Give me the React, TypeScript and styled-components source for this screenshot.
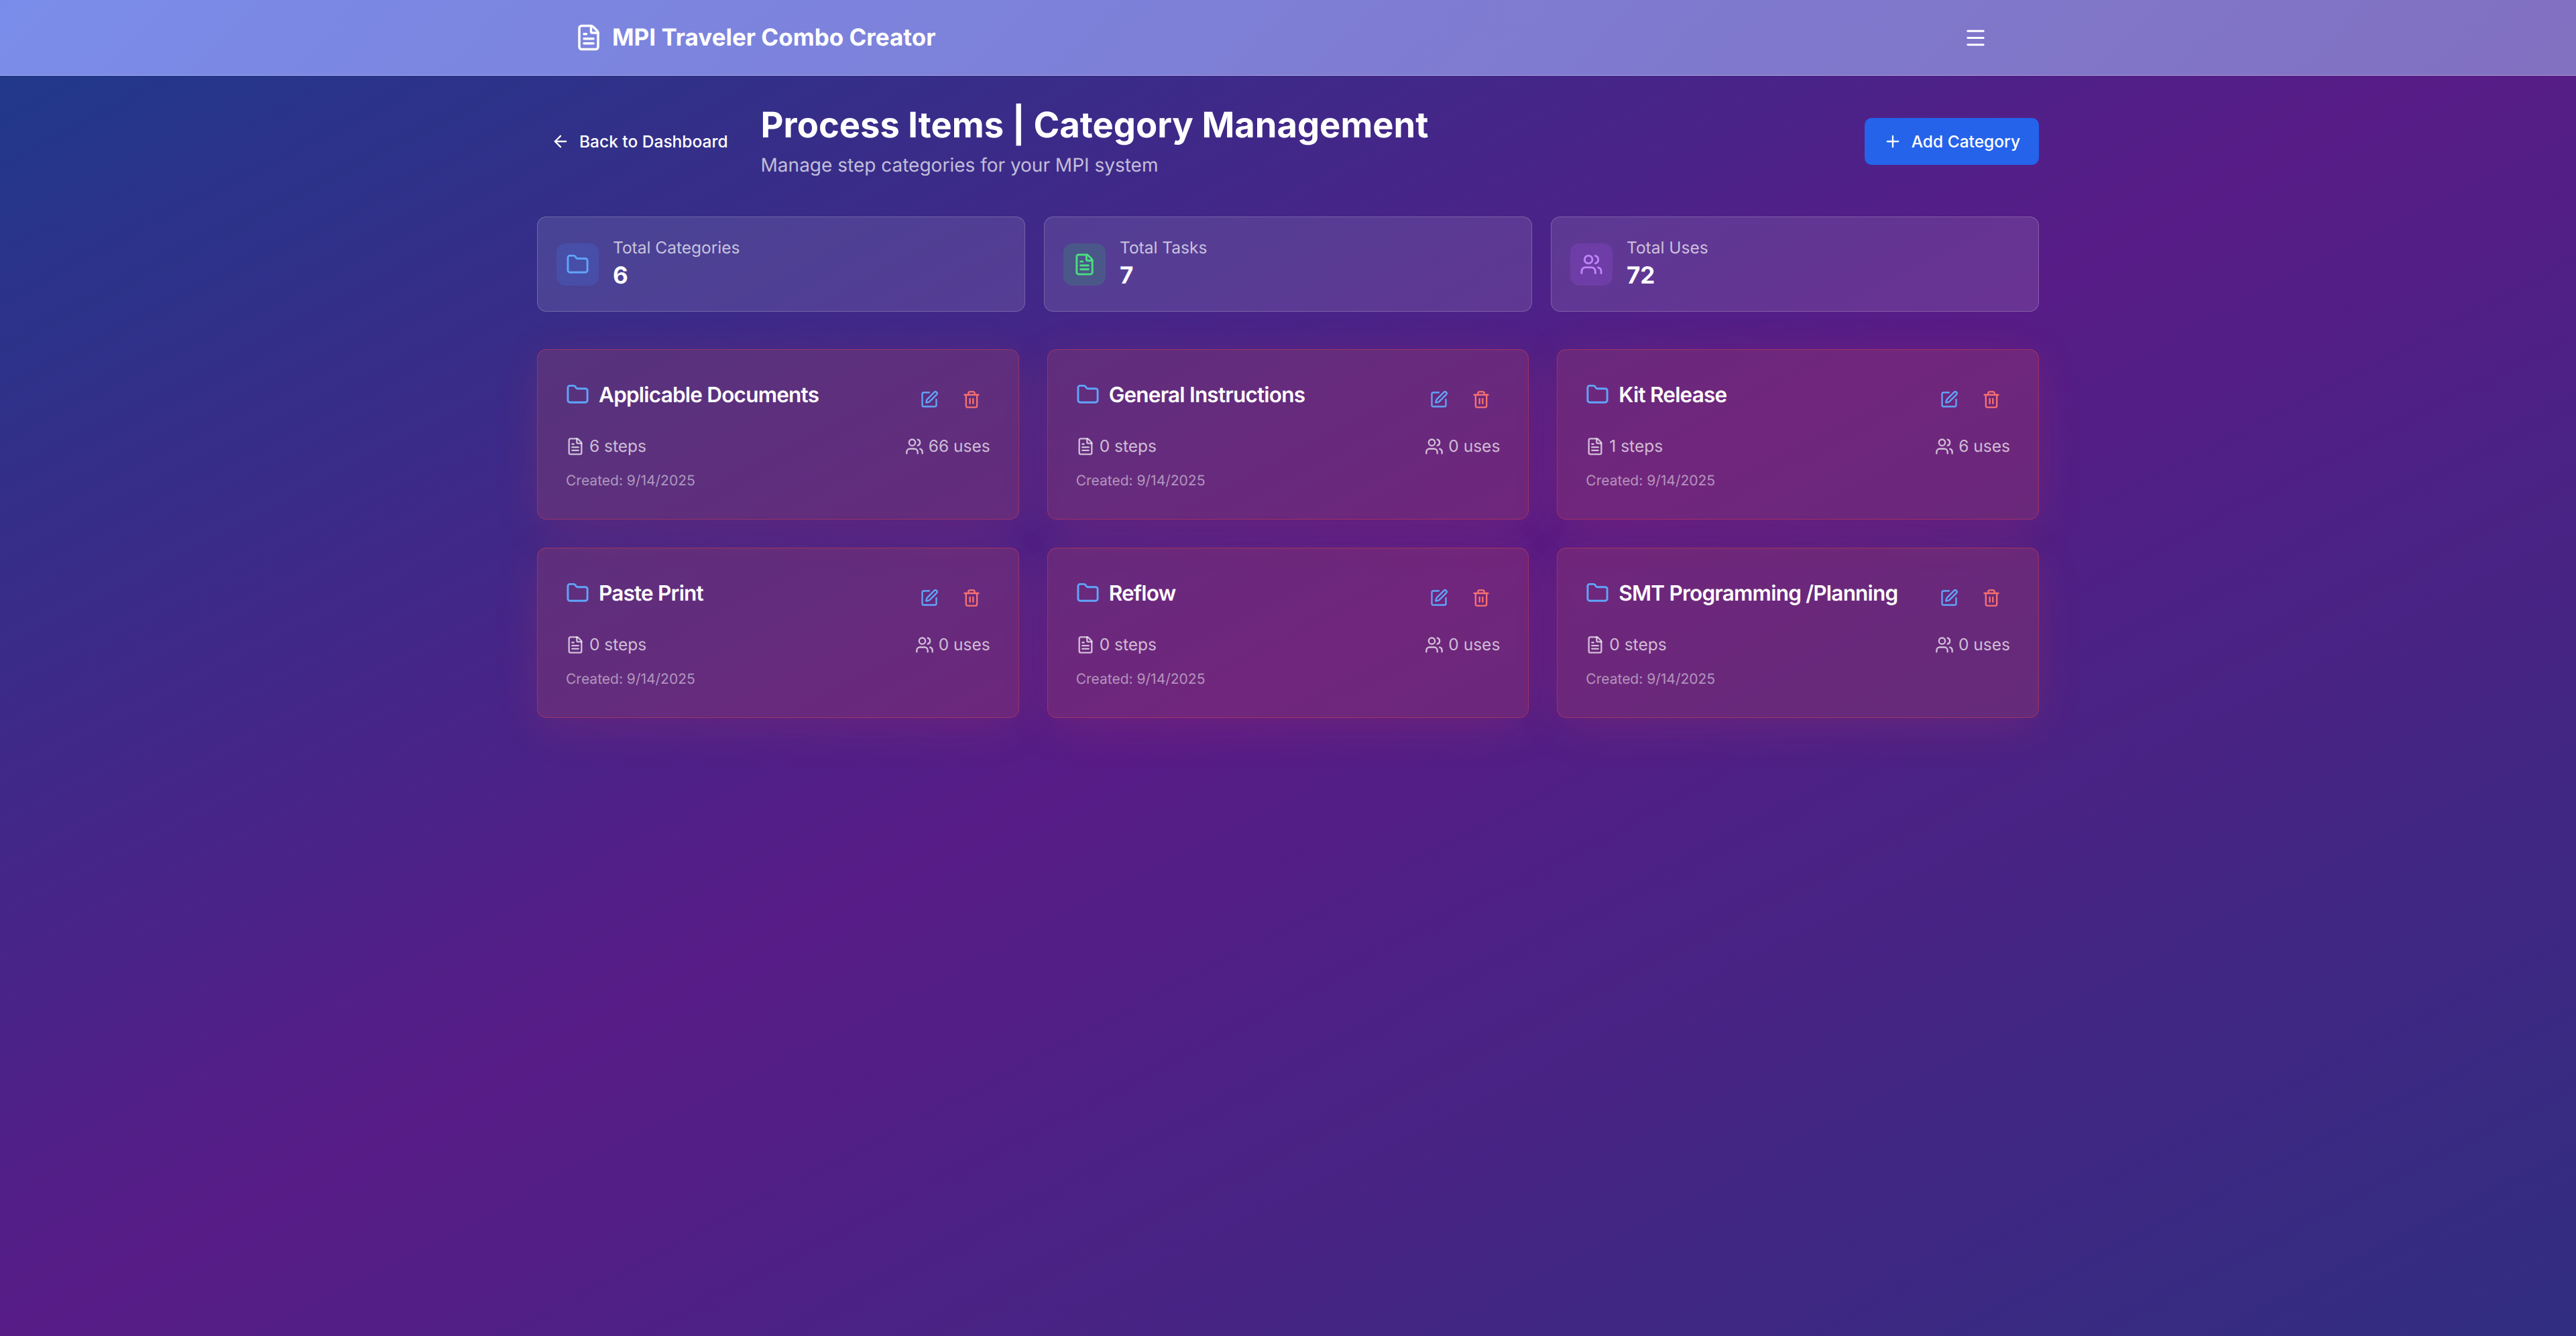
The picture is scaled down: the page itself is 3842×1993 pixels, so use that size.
import React from "react"
import styled, {createGlobalStyle} from "styled-components";
import {ArrowLeft, FileText, Folder, Menu, Plus, SquarePen, Trash2, Users} from "lucide-react";

const GlobalStyle = createGlobalStyle`
  html, body {
    margin: 0;
    padding: 0;
  }

  body {
    font-family: Inter, "Liberation Sans", sans-serif;
    text-rendering: geometricPrecision;
  }

  * {
    box-sizing: border-box;
  }
`

const Page = styled.div`
  min-height: 100vh;
  background: linear-gradient(to bottom right, #1e3a8a, #581c87, #312e81);
  color: #fff;
`

const Nav = styled.header`
  height: 113px;
  background: linear-gradient(135deg, #7a8ce9, #8270c0);
  border-bottom: 1px solid rgba(255, 255, 255, 0.3);
`

const NavInner = styled.div`
  width: 2240px;
  height: 112px;
  margin: 0 auto;
  padding: 0 56px;
  display: flex;
  align-items: center;
  justify-content: space-between;
`

const Brand = styled.div`
  display: flex;
  align-items: center;
  gap: 14px;
  font-size: 35px;
  line-height: 49px;
  font-weight: 700;
`

const MenuButton = styled.button`
  width: 63px;
  height: 63px;
  margin-right: 7px;
  padding: 14px;
  border: 0;
  background: none;
  color: #fff;
  display: flex;
  align-items: center;
  justify-content: center;
`

const Main = styled.main`
  width: 2240px;
  margin: 0 auto;
  padding: 42px 0;
`

const TitleRow = styled.div`
  display: flex;
  align-items: center;
  justify-content: space-between;
  margin-bottom: 56px;
`

const TitleLeft = styled.div`
  display: flex;
  align-items: center;
  gap: 28px;
`

const BackButton = styled.button`
  height: 63px;
  padding: 0 21px;
  display: flex;
  align-items: center;
  gap: 14px;
  border: 0;
  background: none;
  color: #fff;
  font-family: inherit;
  font-size: 24.5px;
  font-weight: 500;
`

const PageTitle = styled.h1`
  margin: 0;
  font-size: 52.5px;
  line-height: 63px;
  font-weight: 700;
`

const Subtitle = styled.p`
  margin: 7px 0 0;
  font-size: 28px;
  line-height: 42px;
  color: rgba(255, 255, 255, 0.7);
`

const AddButton = styled.button`
  height: 70px;
  padding: 0 28px;
  display: flex;
  align-items: center;
  gap: 14px;
  border: 0;
  border-radius: 10.5px;
  background: #2563eb;
  color: #fff;
  font-family: inherit;
  font-size: 24.5px;
  font-weight: 500;
`

const StatGrid = styled.section`
  display: grid;
  grid-template-columns: repeat(3, 1fr);
  gap: 28px;
  margin-bottom: 56px;
`

const StatCard = styled.div`
  padding: 28px;
  display: flex;
  align-items: center;
  gap: 21px;
  background: rgba(255, 255, 255, 0.1);
  border: 1px solid rgba(255, 255, 255, 0.2);
  border-radius: 14px;
`

const StatIcon = styled.div<{ $tone: string }>`
  width: 63px;
  height: 63px;
  padding: 14px;
  border-radius: 14px;
  background: ${p => p.$tone};
  display: flex;
`

const StatLabel = styled.div`
  font-size: 24.5px;
  line-height: 35px;
  color: rgba(255, 255, 255, 0.7);
`

const StatValue = styled.div`
  font-size: 35px;
  line-height: 49px;
  font-weight: 700;
`

const CategoryGrid = styled.section`
  display: grid;
  grid-template-columns: repeat(3, 1fr);
  gap: 42px;
`

const CategoryCard = styled.article`
  padding: 42px;
  background: rgba(230, 90, 70, 0.17);
  border: 1px solid rgba(239, 68, 68, 0.38);
  border-radius: 14px;
  box-shadow: 0 14px 70px -7px rgba(239, 68, 68, 0.18);
`

const CardHead = styled.div`
  display: flex;
  align-items: flex-start;
  justify-content: space-between;
  margin-bottom: 21px;
`

const CardTitle = styled.div`
  display: flex;
  align-items: center;
  gap: 14px;
  font-size: 31.5px;
  line-height: 49px;
  font-weight: 600;
  letter-spacing: -0.025em;
`

const CardActions = styled.div`
  display: flex;
  gap: 7px;
`

const ActionButton = styled.button<{ $color: string }>`
  width: 56px;
  height: 63px;
  padding: 0;
  border: 0;
  background: none;
  color: ${p => p.$color};
  display: flex;
  align-items: center;
  justify-content: center;
`

const CardStats = styled.div`
  display: flex;
  justify-content: space-between;
  font-size: 24.5px;
  line-height: 35px;
  color: rgba(255, 255, 255, 0.7);
`

const CardStat = styled.span`
  display: flex;
  align-items: center;
  gap: 7px;
`

const Created = styled.div`
  margin-top: 21px;
  font-size: 21px;
  line-height: 28px;
  color: rgba(255, 255, 255, 0.5);
`

const stats = [
    {label: "Total Categories", value: "6", Icon: Folder, tone: "rgba(59, 130, 246, 0.2)", color: "#60a5fa"},
    {label: "Total Tasks", value: "7", Icon: FileText, tone: "rgba(34, 197, 94, 0.2)", color: "#4ade80"},
    {label: "Total Uses", value: "72", Icon: Users, tone: "rgba(168, 85, 247, 0.2)", color: "#c084fc"},
]

const categories = [
    {name: "Applicable Documents", steps: 6, uses: 66},
    {name: "General Instructions", steps: 0, uses: 0},
    {name: "Kit Release", steps: 1, uses: 6},
    {name: "Paste Print", steps: 0, uses: 0},
    {name: "Reflow", steps: 0, uses: 0},
    {name: "SMT Programming /Planning", steps: 0, uses: 0},
]

const App: React.FC = () => {
    return (
        <Page>
            <GlobalStyle/>
            <Nav>
                <NavInner>
                    <Brand><FileText size={42}/>MPI Traveler Combo Creator</Brand>
                    <MenuButton><Menu size={35}/></MenuButton>
                </NavInner>
            </Nav>
            <Main>
                <TitleRow>
                    <TitleLeft>
                        <BackButton><ArrowLeft size={28}/>Back to Dashboard</BackButton>
                        <div>
                            <PageTitle>Process Items | Category Management</PageTitle>
                            <Subtitle>Manage step categories for your MPI system</Subtitle>
                        </div>
                    </TitleLeft>
                    <AddButton><Plus size={28}/>Add Category</AddButton>
                </TitleRow>
                <StatGrid>
                    {stats.map(({label, value, Icon, tone, color}) => (
                        <StatCard key={label}>
                            <StatIcon $tone={tone}><Icon size={35} color={color}/></StatIcon>
                            <div>
                                <StatLabel>{label}</StatLabel>
                                <StatValue>{value}</StatValue>
                            </div>
                        </StatCard>
                    ))}
                </StatGrid>
                <CategoryGrid>
                    {categories.map(category => (
                        <CategoryCard key={category.name}>
                            <CardHead>
                                <CardTitle><Folder size={35} color="#60a5fa"/>{category.name}</CardTitle>
                                <CardActions>
                                    <ActionButton $color="#60a5fa"><SquarePen size={28}/></ActionButton>
                                    <ActionButton $color="#f87171"><Trash2 size={28}/></ActionButton>
                                </CardActions>
                            </CardHead>
                            <CardStats>
                                <CardStat><FileText size={28}/>{category.steps} steps</CardStat>
                                <CardStat><Users size={28}/>{category.uses} uses</CardStat>
                            </CardStats>
                            <Created>Created: 9/14/2025</Created>
                        </CategoryCard>
                    ))}
                </CategoryGrid>
            </Main>
        </Page>
    )
}

export default App
